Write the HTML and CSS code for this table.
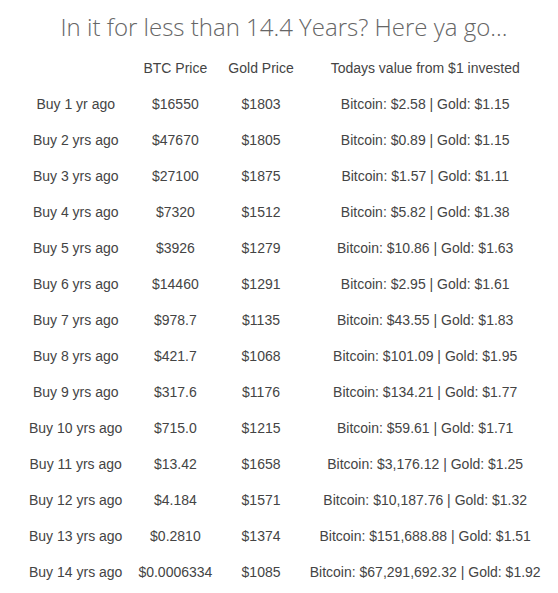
FILE: index.html
```html
<!DOCTYPE html>
<html>
<head>
<meta charset="utf-8">
<link rel="stylesheet" href="styles.css">
</head>
<body>
<h2 class="title">In it for less than 14.4 Years? Here ya go...</h2>
<table class="returns">
  <thead>
    <tr><th></th><th>BTC Price</th><th>Gold Price</th><th>Todays value from $1 invested</th></tr>
  </thead>
  <tbody>
    <tr><td>Buy 1 yr ago</td><td>$16550</td><td>$1803</td><td>Bitcoin: $2.58 | Gold: $1.15</td></tr>
    <tr><td>Buy 2 yrs ago</td><td>$47670</td><td>$1805</td><td>Bitcoin: $0.89 | Gold: $1.15</td></tr>
    <tr><td>Buy 3 yrs ago</td><td>$27100</td><td>$1875</td><td>Bitcoin: $1.57 | Gold: $1.11</td></tr>
    <tr><td>Buy 4 yrs ago</td><td>$7320</td><td>$1512</td><td>Bitcoin: $5.82 | Gold: $1.38</td></tr>
    <tr><td>Buy 5 yrs ago</td><td>$3926</td><td>$1279</td><td>Bitcoin: $10.86 | Gold: $1.63</td></tr>
    <tr><td>Buy 6 yrs ago</td><td>$14460</td><td>$1291</td><td>Bitcoin: $2.95 | Gold: $1.61</td></tr>
    <tr><td>Buy 7 yrs ago</td><td>$978.7</td><td>$1135</td><td>Bitcoin: $43.55 | Gold: $1.83</td></tr>
    <tr><td>Buy 8 yrs ago</td><td>$421.7</td><td>$1068</td><td>Bitcoin: $101.09 | Gold: $1.95</td></tr>
    <tr><td>Buy 9 yrs ago</td><td>$317.6</td><td>$1176</td><td>Bitcoin: $134.21 | Gold: $1.77</td></tr>
    <tr><td>Buy 10 yrs ago</td><td>$715.0</td><td>$1215</td><td>Bitcoin: $59.61 | Gold: $1.71</td></tr>
    <tr><td>Buy 11 yrs ago</td><td>$13.42</td><td>$1658</td><td>Bitcoin: $3,176.12 | Gold: $1.25</td></tr>
    <tr><td>Buy 12 yrs ago</td><td>$4.184</td><td>$1571</td><td>Bitcoin: $10,187.76 | Gold: $1.32</td></tr>
    <tr><td>Buy 13 yrs ago</td><td>$0.2810</td><td>$1374</td><td>Bitcoin: $151,688.88 | Gold: $1.51</td></tr>
    <tr><td>Buy 14 yrs ago</td><td>$0.0006334</td><td>$1085</td><td>Bitcoin: $67,291,692.32 | Gold: $1.92</td></tr>
  </tbody>
</table>
</body>
</html>
```
FILE: styles.css
```css
body {
  margin: 0;
  background: #fff;
  font-family: "Liberation Sans", Arial, sans-serif;
  color: #444;
}
.title {
  margin: 0;
  padding: 11px 0 0 10px;
  height: 39px;
  text-align: center;
  font-family: "Open Sans", sans-serif;
  font-weight: 300;
  font-size: 24px;
  line-height: 32px;
  color: #666;
}
.returns {
  margin-left: 21px;
  border-collapse: collapse;
  font-size: 14px;
}
.returns th,
.returns td {
  padding: 0 8px;
  height: 36px;
  text-align: center;
  font-weight: normal;
  white-space: nowrap;
}
```
